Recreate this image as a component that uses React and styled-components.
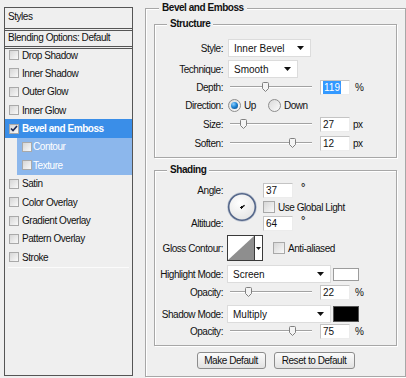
import React from 'react';
import styled, { createGlobalStyle } from 'styled-components';

const GlobalStyle = createGlobalStyle`
  html, body {
    margin: 0;
    padding: 0;
    background: #efefef;
  }
  body {
    font-family: 'Liberation Sans', Arial, sans-serif;
    font-size: 10px;
    letter-spacing: -0.45px;
    color: #111;
  }
`;

const Dialog = styled.div`
  display: flex;
  align-items: flex-start;
  width: 406px;
  height: 378px;
  padding: 2px 0 0 4px;
  box-sizing: border-box;
  overflow: hidden;
`;

/* ---------- left styles list ---------- */

const StylesPanel = styled.div`
  width: 129px;
  height: 369px;
  margin-top: 5px;
  flex-shrink: 0;
  border: 1px solid #555;
  box-sizing: border-box;
  display: flex;
  flex-direction: column;
`;

const PanelHead = styled.div`
  height: ${(p) => p.h}px;
  display: flex;
  align-items: center;
  padding: 0 0 ${(p) => p.lift || 0}px 3px;
  border-bottom: 1px solid #555;
  box-sizing: border-box;
  & + & {
    margin-top: 1px;
    border-top: 1px solid #555;
  }
`;

const StyleList = styled.div`
  margin-top: 1px;
  border-top: 1px solid #555;
  flex: 1;
`;

const ListRows = styled.div`
  margin-top: -3.2px;
`;

const ListRow = styled.div`
  height: 18.4px;
  display: flex;
  align-items: center;
  gap: ${(p) => (p.sub ? 1 : 3)}px;
  padding-left: ${(p) => (p.sub ? 5 : 4)}px;
  margin-left: ${(p) => (p.sub ? 12 : 0)}px;
  background: ${(p) => (p.active ? '#3a8ee8' : p.sub ? '#8cb7ec' : 'transparent')};
  color: ${(p) => (p.active || p.sub ? '#fff' : '#111')};
  font-weight: ${(p) => (p.active ? 'bold' : 'normal')};
`;

const ListRule = styled.div`
  height: 1px;
  margin: 0 3px;
  background: #fbfbfb;
`;

const Box = styled.span`
  width: ${(p) => p.size || 10}px;
  height: ${(p) => p.size || 10}px;
  flex-shrink: 0;
  box-sizing: border-box;
  border: 1px solid #a9a9a9;
  background: linear-gradient(135deg, #d6d6d6, #f9f9f9);
  display: inline-flex;
  align-items: center;
  justify-content: center;
`;

/* ---------- right panel ---------- */

const Group = styled.fieldset`
  margin: ${(p) => p.top || 0}px ${(p) => p.side || 0}px 0;
  padding: 0 ${(p) => p.pad || 0}px;
  width: ${(p) => (p.w ? `${p.w}px` : 'auto')};
  height: ${(p) => p.h}px;
  min-width: 0;
  box-sizing: border-box;
  border: 1px solid #a7a7a7;
  box-shadow: inset 1px 1px 0 #fff, 1px 1px 0 #fff;
  flex-shrink: 0;
`;

const Legend = styled.legend`
  margin-left: ${(p) => p.indent}px;
  padding: 0 3px;
  line-height: 12px;
  font-weight: bold;
  background: #efefef;
`;

const Field = styled.div`
  display: grid;
  grid-template-columns: 68px auto;
  column-gap: ${(p) => p.col || 5}px;
  align-items: center;
  height: ${(p) => p.h || 18}px;
  margin-top: ${(p) => p.gap || 0}px;
`;

const Label = styled.span`
  text-align: right;
  white-space: nowrap;
`;

const Controls = styled.div`
  display: flex;
  align-items: center;
  gap: ${(p) => p.gap || 0}px;
`;

const SelectBox = styled.div`
  width: ${(p) => p.w}px;
  height: 18px;
  box-sizing: border-box;
  padding: 0 6px 0 5px;
  display: flex;
  align-items: center;
  justify-content: space-between;
  background: #fff;
  border: 1px solid #dcdcdc;
  letter-spacing: 0;
`;

const NumberBox = styled.div`
  width: 30px;
  height: ${(p) => p.h || 15}px;
  box-sizing: border-box;
  padding-left: 2px;
  display: flex;
  align-items: center;
  background: #fff;
  border: 1px solid;
  border-color: #c4c4c4 #ececec #ececec #c4c4c4;
  letter-spacing: 0;
`;

const Selected = styled.span`
  background: #3399ff;
  color: #fff;
  padding: 1px 1px;
`;

const Unit = styled.span`
  margin-left: ${(p) => p.gap || 4}px;
`;

const SliderWrap = styled.div`
  position: relative;
  width: 82px;
  height: 12px;
  margin: 0 8px 0 2px;
  display: flex;
  align-items: center;
`;

const Track = styled.div`
  width: 100%;
  height: 0;
  border-top: 1px solid #a2a2a2;
  border-bottom: 1px solid #fff;
`;

const Thumb = styled.svg`
  position: absolute;
  top: 1px;
  margin-left: -3.5px;
`;

const RadioDot = styled.span`
  width: 13px;
  height: 13px;
  box-sizing: border-box;
  border-radius: 50%;
  border: 1px solid #8d8d8d;
  background: linear-gradient(135deg, #dadada, #fbfbfb);
  display: inline-flex;
  align-items: center;
  justify-content: center;
  &::after {
    content: '';
    display: ${(p) => (p.on ? 'block' : 'none')};
    width: 7px;
    height: 7px;
    border-radius: 50%;
    background: radial-gradient(circle at 35% 30%, #8fd0ff 0%, #1f86d6 45%, #0a3f7a 100%);
  }
`;

const Option = styled.span`
  display: inline-flex;
  align-items: center;
  gap: 3px;
  margin-left: ${(p) => p.indent || 0}px;
`;

const AngleBlock = styled.div`
  display: grid;
  grid-template-columns: 68px 32px 34px auto;
  grid-template-rows: 15px 18px 15px;
  column-gap: 4px;
  align-items: center;
  margin-top: 7px;
`;

const Dial = styled.svg`
  grid-column: 2;
  grid-row: 1 / 4;
  align-self: center;
`;

const Deg = styled.span`
  align-self: start;
  margin-top: -2px;
  font-size: 11px;
  font-weight: bold;
  color: #333;
`;

const Wide = styled.div`
  grid-column: 3 / 5;
  grid-row: 2;
  display: flex;
  align-items: center;
  gap: 3px;
`;

const Contour = styled.div`
  width: 36px;
  height: 26px;
  box-sizing: border-box;
  border: 1px solid #3a3a3a;
  display: flex;
  background: #fff;
`;

const ContourArrow = styled.div`
  flex: 1;
  border-left: 1px solid #3a3a3a;
  display: flex;
  align-items: center;
  justify-content: center;
`;

const Swatch = styled.div`
  width: 26px;
  height: ${(p) => p.h}px;
  box-sizing: border-box;
  background: ${(p) => p.color};
  border: 1px solid ${(p) => (p.color === '#000' ? '#555' : '#9c9c9c')};
`;

const ButtonRow = styled.div`
  display: flex;
  justify-content: center;
  gap: 8px;
  margin-top: 6px;
`;

const Button = styled.button`
  width: ${(p) => p.w}px;
  height: 17px;
  padding: 0;
  font: inherit;
  letter-spacing: inherit;
  color: #111;
  border: 1px solid #8c8c8c;
  border-radius: 3px;
  background: linear-gradient(#fbfbfb, #e2e2e2);
`;

const Check = () => (
  <svg width="8" height="7" viewBox="0 0 8 7">
    <path d="M1 3.5 L3 5.5 L7 1" fill="none" stroke="#1b2a55" strokeWidth="1.6" />
  </svg>
);

const Arrow = ({ w = 7 }) => (
  <svg width={w} height="4" viewBox="0 0 7 4">
    <path d="M0 0 H7 L3.5 4 Z" fill="#111" />
  </svg>
);

const Slider = ({ at }) => (
  <SliderWrap>
    <Track />
    <Thumb width="7" height="10" viewBox="0 0 7 10" style={{ left: `${at}%` }}>
      <path d="M0.5 1.5 Q0.5 0.5 1.5 0.5 H5.5 Q6.5 0.5 6.5 1.5 V6.5 L3.5 9.5 L0.5 6.5 Z" fill="#f4f4f4" stroke="#808080" />
    </Thumb>
  </SliderWrap>
);

const Select = ({ w, children }) => (
  <SelectBox w={w}>
    <span>{children}</span>
    <Arrow />
  </SelectBox>
);

const layers = [
  { label: 'Drop Shadow' },
  { label: 'Inner Shadow' },
  { label: 'Outer Glow' },
  { label: 'Inner Glow' },
  { label: 'Bevel and Emboss', checked: true, active: true },
  { label: 'Contour', sub: true },
  { label: 'Texture', sub: true },
  { label: 'Satin' },
  { label: 'Color Overlay' },
  { label: 'Gradient Overlay' },
  { label: 'Pattern Overlay' },
  { label: 'Stroke' },
];

const SliderField = ({ label, at, value, unit, h, gap, col }) => (
  <Field h={h} gap={gap} col={col}>
    <Label>{label}</Label>
    <Controls>
      <Slider at={at} />
      <NumberBox>{value}</NumberBox>
      <Unit gap={unit === '%' ? 5 : 3}>{unit}</Unit>
    </Controls>
  </Field>
);

export default function App() {
  return (
    <>
      <GlobalStyle />
      <Dialog>
        <StylesPanel>
          <PanelHead h={21} lift={3}>Styles</PanelHead>
          <PanelHead h={17} lift={2}>Blending Options: Default</PanelHead>
          <StyleList>
            <ListRows>
              {layers.map((l) => (
                <ListRow key={l.label} active={l.active} sub={l.sub}>
                  <Box>{l.checked && <Check />}</Box>
                  {l.label}
                </ListRow>
              ))}
            </ListRows>
            <ListRule />
          </StyleList>
        </StylesPanel>

        <Group w={261} h={375} pad={8} side={12}>
          <Legend indent={5}>Bevel and Emboss</Legend>

          <Group h={140} top={4}>
            <Legend indent={12}>Structure</Legend>
            <Field gap={9}>
              <Label>Style:</Label>
              <Select w={83}>Inner Bevel</Select>
            </Field>
            <Field gap={3}>
              <Label>Technique:</Label>
              <Select w={70}>Smooth</Select>
            </Field>
            <Field>
              <Label>Depth:</Label>
              <Controls>
                <Slider at={43} />
                <NumberBox><Selected>119</Selected></NumberBox>
                <Unit gap={5}>%</Unit>
              </Controls>
            </Field>
            <Field>
              <Label>Direction:</Label>
              <Controls>
                <Option><RadioDot on />Up</Option>
                <Option indent={12}><RadioDot />Down</Option>
              </Controls>
            </Field>
            <SliderField label="Size:" at={16} value="27" unit="px" gap={1} />
            <SliderField label="Soften:" at={76} value="12" unit="px" gap={1} />
          </Group>

          <Group h={182} top={6}>
            <Legend indent={12}>Shading</Legend>
            <AngleBlock>
              <Label>Angle:</Label>
              <Dial width="32" height="32" viewBox="0 0 32 32">
                <defs>
                  <radialGradient id="dialFace" cx="40%" cy="35%" r="70%">
                    <stop offset="0" stopColor="#ffffff" />
                    <stop offset="1" stopColor="#e4e4e4" />
                  </radialGradient>
                </defs>
                <circle cx="15" cy="16" r="14.5" fill="none" stroke="#c3cad6" strokeWidth="1" />
                <circle cx="15" cy="16" r="13.3" fill="url(#dialFace)" stroke="#55678a" strokeWidth="1.6" />
                <path d="M13 16.5 H16 M14.5 15 V18" stroke="#111" strokeWidth="1" />
                <path d="M14.5 16.5 L17.6 14.2" stroke="#111" strokeWidth="1.4" />
              </Dial>
              <NumberBox>37</NumberBox>
              <Deg>°</Deg>
              <Wide>
                <Box size={12} />
                Use Global Light
              </Wide>
              <Label style={{ gridRow: 3, gridColumn: 1 }}>Altitude:</Label>
              <NumberBox style={{ gridRow: 3, gridColumn: 3 }}>64</NumberBox>
              <Deg style={{ gridRow: 3, gridColumn: 4 }}>°</Deg>
            </AngleBlock>

            <Field h={26} gap={4} col={4}>
              <Label>Gloss Contour:</Label>
              <Controls gap={10}>
                <Contour>
                  <svg width="26" height="24" viewBox="0 0 26 24">
                    <path d="M0 24 L26 0 V24 Z" fill="#8e8e8e" />
                  </svg>
                  <ContourArrow>
                    <svg width="5" height="3" viewBox="0 0 5 3">
                      <path d="M0 0 H5 L2.5 3 Z" fill="#111" />
                    </svg>
                  </ContourArrow>
                </Contour>
                <Option>
                  <Box size={12} />
                  Anti-aliased
                </Option>
              </Controls>
            </Field>

            <Field gap={4} col={4}>
              <Label>Highlight Mode:</Label>
              <Controls gap={2}>
                <Select w={104}>Screen</Select>
                <Swatch color="#fff" h={13} />
              </Controls>
            </Field>
            <SliderField label="Opacity:" at={22} value="22" unit="%" h={16} gap={1} col={5} />
            <Field gap={5} col={4}>
              <Label>Shadow Mode:</Label>
              <Controls gap={2}>
                <Select w={104}>Multiply</Select>
                <Swatch color="#000" h={16} />
              </Controls>
            </Field>
            <SliderField label="Opacity:" at={76} value="75" unit="%" h={16} col={5} />
          </Group>

          <ButtonRow>
            <Button w={69}>Make Default</Button>
            <Button w={81}>Reset to Default</Button>
          </ButtonRow>
        </Group>
      </Dialog>
    </>
  );
}
